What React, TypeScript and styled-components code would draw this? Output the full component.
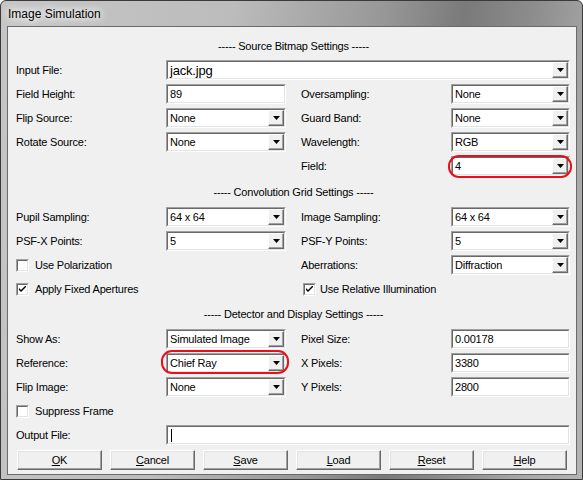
import React from 'react';
import styled, { createGlobalStyle } from 'styled-components';

const Global = createGlobalStyle`
  html, body { margin: 0; padding: 0; background: #ffffff; }
  body { font-family: "Liberation Sans", Arial, sans-serif; font-size: 11px; color: #000; }
`;

const Window = styled.div`
  width: 583px;
  height: 480px;
  box-sizing: border-box;
  border: 1px solid #3a3a3a;
  border-radius: 6px 6px 0 0;
  background: linear-gradient(100deg, #c6c6c6 0%, #bcbcbc 35%, #979797 58%, #7a7a7a 70%, #8c8c8c 80%, #aaaaaa 92%, #b4b4b4 100%);
  padding: 0 5px 4px 6px;
  display: flex;
  flex-direction: column;
  overflow: hidden;
`;

const TitleBar = styled.div`
  height: 25px;
  display: flex;
  align-items: center;
  padding-left: 1px;
  font-family: "Liberation Sans", Arial, sans-serif;
  font-size: 12px;
  color: #000;
  text-shadow: 0 0 6px #ffffff, 0 0 10px #ffffff, 0 0 14px #f4f4f4;
`;

const Client = styled.div`
  flex: 1;
  border: 1px solid #6a6a6a;
  background: #f0f0f0;
  padding: 7px 6px 3px 8px;
  display: flex;
  flex-direction: column;
  letter-spacing: -0.2px;
`;

const SectionHeader = styled.div<{ $h: number }>`
  height: ${(p) => p.$h}px;
  display: flex;
  align-items: center;
  justify-content: center;
  padding-left: 1px;
`;

const Grid = styled.div`
  display: grid;
  grid-template-columns: 150px 120px 15px 150px 119px;
  grid-auto-rows: 24px;
  align-items: center;
`;

const Label = styled.div<{ $col: number }>`
  grid-column: ${(p) => p.$col};
  white-space: nowrap;
`;

const Sunken = styled.div<{ $col: string; $h?: number }>`
  grid-column: ${(p) => p.$col};
  position: relative;
  height: ${(p) => p.$h ?? 20}px;
  box-sizing: border-box;
  border: 1px solid;
  border-color: #a0a0a0 #ffffff #ffffff #a0a0a0;
  display: flex;
`;

const FieldInner = styled.div<{ $big?: boolean }>`
  flex: 1;
  display: flex;
  align-items: center;
  border: 1px solid;
  border-color: #696969 #e3e3e3 #e3e3e3 #696969;
  background: #ffffff;
  padding-left: 2px;
  font-size: ${(p) => (p.$big ? 13 : 11)}px;
  overflow: hidden;
  white-space: nowrap;
`;

const Value = styled.span`
  flex: 1;
`;

const ArrowBtn = styled.div`
  width: 16px;
  align-self: stretch;
  box-sizing: border-box;
  border: 1px solid;
  border-color: #ffffff #696969 #696969 #ffffff;
  box-shadow: inset -1px -1px 0 #a0a0a0;
  background: #f0f0f0;
  display: flex;
  align-items: center;
  justify-content: center;
`;

const Caret = styled.span`
  width: 1px;
  height: 13px;
  background: #000;
  margin-left: 1px;
`;

const Ring = styled.span<{ $inset: string }>`
  position: absolute;
  inset: ${(p) => p.$inset};
  border: 2.5px solid #e8101a;
  border-radius: 11px;
  pointer-events: none;
`;

const CheckRow = styled.label<{ $col: string; $indent?: number; $gap?: number }>`
  grid-column: ${(p) => p.$col};
  display: flex;
  align-items: center;
  gap: ${(p) => p.$gap ?? 6}px;
  padding-left: ${(p) => p.$indent ?? 0}px;
  white-space: nowrap;
`;

const CheckOuter = styled.span`
  width: 13px;
  height: 13px;
  box-sizing: border-box;
  border: 1px solid;
  border-color: #a0a0a0 #ffffff #ffffff #a0a0a0;
  display: flex;
`;

const CheckInner = styled.span`
  flex: 1;
  border: 1px solid;
  border-color: #696969 #e3e3e3 #e3e3e3 #696969;
  background: #ffffff;
  display: flex;
  align-items: center;
  justify-content: center;
`;

const ButtonBar = styled.div`
  margin-top: 3px;
  padding-left: 1px;
  display: flex;
  gap: 8px;
`;

const Button = styled.div`
  width: 85px;
  height: 20px;
  box-sizing: border-box;
  border: 1px solid;
  border-color: #ffffff #696969 #696969 #ffffff;
  box-shadow: inset -1px -1px 0 #a0a0a0, inset 1px 1px 0 #e3e3e3;
  background: #f0f0f0;
  display: flex;
  align-items: center;
  justify-content: center;
  font-size: 11px;
`;

const Mn = styled.span`
  text-decoration: underline;
  text-underline-offset: 1px;
`;

const Arrow = () => (
  <svg width="7" height="4" viewBox="0 0 7 4">
    <polygon points="0,0 7,0 3.5,4" fill="#000" />
  </svg>
);

const Combo: React.FC<{ col: string; value: string; big?: boolean; ring?: string }> = ({ col, value, big, ring }) => (
  <Sunken $col={col}>
    <FieldInner $big={big}>
      <Value>{value}</Value>
      <ArrowBtn>
        <Arrow />
      </ArrowBtn>
    </FieldInner>
    {ring && <Ring $inset={ring} />}
  </Sunken>
);

const TextBox: React.FC<{ col: string; value?: string; caret?: boolean }> = ({ col, value, caret }) => (
  <Sunken $col={col}>
    <FieldInner>
      {caret ? <Caret /> : <Value>{value}</Value>}
    </FieldInner>
  </Sunken>
);

const Check: React.FC<{ col: string; label: string; checked?: boolean; indent?: number; gap?: number }> = ({
  col,
  label,
  checked,
  indent,
  gap,
}) => (
  <CheckRow $col={col} $indent={indent} $gap={gap}>
    <CheckOuter>
      <CheckInner>
        {checked && (
          <svg width="7" height="7" viewBox="0 0 7 7">
            <path d="M0 2 L0 4 L2 6 L7 1 L7 -1 L2 4 Z" fill="#000" />
          </svg>
        )}
      </CheckInner>
    </CheckOuter>
    <span>{label}</span>
  </CheckRow>
);

const buttons: [string, string][] = [
  ['O', 'K'],
  ['C', 'ancel'],
  ['S', 'ave'],
  ['L', 'oad'],
  ['R', 'eset'],
  ['H', 'elp'],
];

export default function App() {
  return (
    <>
      <Global />
      <Window>
        <TitleBar>Image Simulation</TitleBar>
        <Client>
          <SectionHeader $h={24}>----- Source Bitmap Settings -----</SectionHeader>
          <Grid>
            <Label $col={1}>Input File:</Label>
            <Combo col="2 / 6" value="jack.jpg" big />

            <Label $col={1}>Field Height:</Label>
            <TextBox col="2" value="89" />
            <Label $col={4}>Oversampling:</Label>
            <Combo col="5" value="None" />

            <Label $col={1}>Flip Source:</Label>
            <Combo col="2" value="None" />
            <Label $col={4}>Guard Band:</Label>
            <Combo col="5" value="None" />

            <Label $col={1}>Rotate Source:</Label>
            <Combo col="2" value="None" />
            <Label $col={4}>Wavelength:</Label>
            <Combo col="5" value="RGB" />

            <Label $col={4}>Field:</Label>
            <Combo col="5" value="4" ring="-2px -3px -3px -4px" />
          </Grid>

          <SectionHeader $h={27}>----- Convolution Grid Settings -----</SectionHeader>
          <Grid>
            <Label $col={1}>Pupil Sampling:</Label>
            <Combo col="2" value="64 x 64" />
            <Label $col={4}>Image Sampling:</Label>
            <Combo col="5" value="64 x 64" />

            <Label $col={1}>PSF-X Points:</Label>
            <Combo col="2" value="5" />
            <Label $col={4}>PSF-Y Points:</Label>
            <Combo col="5" value="5" />

            <Check col="1 / 3" label="Use Polarization" />
            <Label $col={4}>Aberrations:</Label>
            <Combo col="5" value="Diffraction" />

            <Check col="1 / 3" label="Apply Fixed Apertures" checked />
            <Check col="4 / 6" label="Use Relative Illumination" checked indent={2} gap={4} />
          </Grid>

          <SectionHeader $h={26}>----- Detector and Display Settings -----</SectionHeader>
          <Grid>
            <Label $col={1}>Show As:</Label>
            <Combo col="2" value="Simulated Image" />
            <Label $col={4}>Pixel Size:</Label>
            <TextBox col="5" value="0.00178" />

            <Label $col={1}>Reference:</Label>
            <Combo col="2" value="Chief Ray" ring="-4px -4px -2px -6px" />
            <Label $col={4}>X Pixels:</Label>
            <TextBox col="5" value="3380" />

            <Label $col={1}>Flip Image:</Label>
            <Combo col="2" value="None" />
            <Label $col={4}>Y Pixels:</Label>
            <TextBox col="5" value="2800" />

            <Check col="1 / 3" label="Suppress Frame" />

            <Label $col={1}>Output File:</Label>
            <TextBox col="2 / 6" caret />
          </Grid>

          <ButtonBar>
            {buttons.map(([m, rest]) => (
              <Button key={m + rest}>
                <Mn>{m}</Mn>
                {rest}
              </Button>
            ))}
          </ButtonBar>
        </Client>
      </Window>
    </>
  );
}
